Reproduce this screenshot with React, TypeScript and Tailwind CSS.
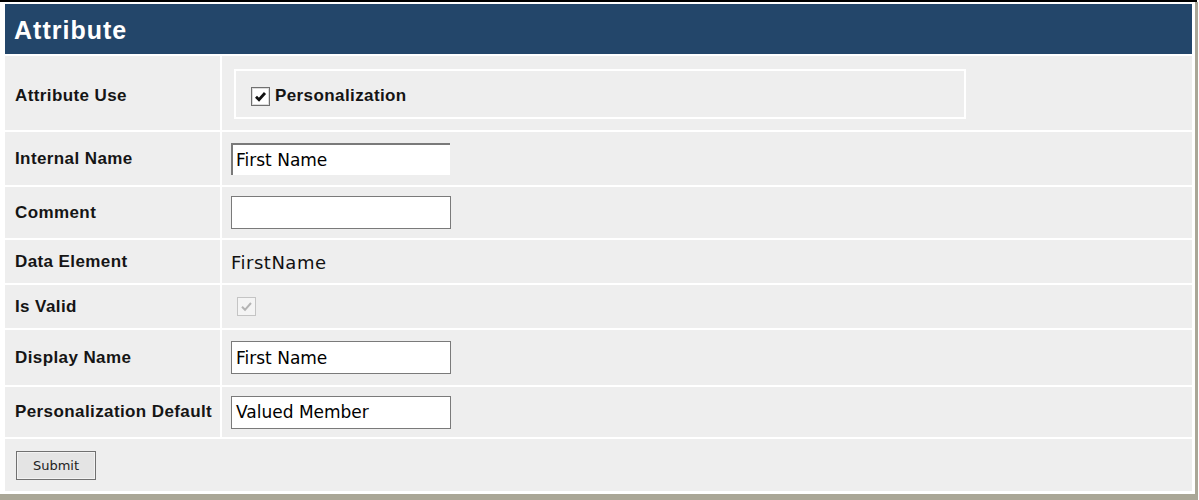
import type { ReactNode } from "react";

function Check({ disabled }: { disabled?: boolean }) {
  return (
    <span
      className={
        disabled
          ? "flex h-[19px] w-[19px] items-center justify-center border border-[#c4c4c4] bg-[#f4f4f4]"
          : "flex h-[19px] w-[19px] items-center justify-center border border-[#707070] bg-white shadow-[inset_0_0_0_1px_#dcdcdc]"
      }
    >
      <svg width="13" height="13" viewBox="0 0 13 13">
        <path
          d="M2 6.8 L5 9.8 L11 3"
          fill="none"
          stroke={disabled ? "#b4b4b4" : "#111"}
          strokeWidth={disabled ? 2 : 2.8}
        />
      </svg>
    </span>
  );
}

function Row({
  label,
  h,
  children,
}: {
  label: string;
  h: string;
  children: ReactNode;
}) {
  return (
    <div className={`flex gap-[2px] ${h}`}>
      <div className="flex w-[215px] items-center bg-[#eeeeee] pl-[10px] text-[17px] font-bold tracking-[0.4px] text-[#151515]">
        {label}
      </div>
      <div className="flex flex-1 items-center bg-[#eeeeee] pl-[9px]">
        {children}
      </div>
    </div>
  );
}

function TextBox({ value }: { value?: string }) {
  return (
    <div className="flex h-[33px] w-[220px] items-center border border-[#7a7a7a] bg-white px-[4px] pt-[2px] font-['DejaVu_Sans',sans-serif] text-[17px] text-black">
      {value}
    </div>
  );
}

export default function App() {
  return (
    <div className="h-[500px] w-[1199px] overflow-hidden bg-white font-['Liberation_Sans',Arial,sans-serif]">
      <div className="h-[2px] w-[1197px] bg-black" />
      <div className="flex h-[498px] w-[1198px] flex-col border-r-[3px] border-b-[6px] border-[#aaa797] bg-white pt-[2px] pr-[3px] pb-[3px] pl-[5px]">
        <div className="flex h-[50px] items-center bg-[#23466a] pt-[3px] pl-[9px] text-[25px] font-bold tracking-[1px] text-white">
          Attribute
        </div>
        <div className="flex flex-col gap-[2px] pt-[2px]">
          <div className="flex h-[74px] gap-[2px]">
            <div className="flex w-[215px] items-center bg-[#eeeeee] pt-[6px] pl-[10px] text-[17px] font-bold tracking-[0.4px] text-[#151515]">
              Attribute Use
            </div>
            <div className="flex-1 bg-[#eeeeee] pt-[13px] pl-[12px]">
              <div className="flex h-[50px] w-[732px] items-center gap-[5px] border-2 border-white pt-[4px] pl-[15px]">
                <Check />
                <span className="text-[17px] font-bold tracking-[0.4px] text-[#151515]">
                  Personalization
                </span>
              </div>
            </div>
          </div>
          <Row label="Internal Name" h="h-[53px]">
            <div className="flex h-[32px] w-[219px] items-center border-t-2 border-l-2 border-[#7a7a7a] bg-white px-[3px] pt-[3px] font-['DejaVu_Sans',sans-serif] text-[17px] text-black">
              First Name
            </div>
          </Row>
          <Row label="Comment" h="h-[51px]">
            <TextBox />
          </Row>
          <Row label="Data Element" h="h-[43px]">
            <span className="pt-[2px] font-['DejaVu_Sans',sans-serif] text-[18px] tracking-[0.5px] text-[#111]">
              FirstName
            </span>
          </Row>
          <Row label="Is Valid" h="h-[43px]">
            <div className="pl-[6px]">
              <Check disabled />
            </div>
          </Row>
          <Row label="Display Name" h="h-[55px]">
            <TextBox value="First Name" />
          </Row>
          <Row label="Personalization Default" h="h-[50px]">
            <TextBox value="Valued Member" />
          </Row>
          <div className="flex h-[52px] items-center bg-[#eeeeee] pl-[11px]">
            <button className="h-[29px] w-[80px] border border-[#707070] bg-[#e4e4e4] pt-[2px] font-['DejaVu_Sans',sans-serif] text-[13px] text-[#222] shadow-[inset_0_0_0_1px_#f2f2f2]">
              Submit
            </button>
          </div>
        </div>
      </div>
    </div>
  );
}
